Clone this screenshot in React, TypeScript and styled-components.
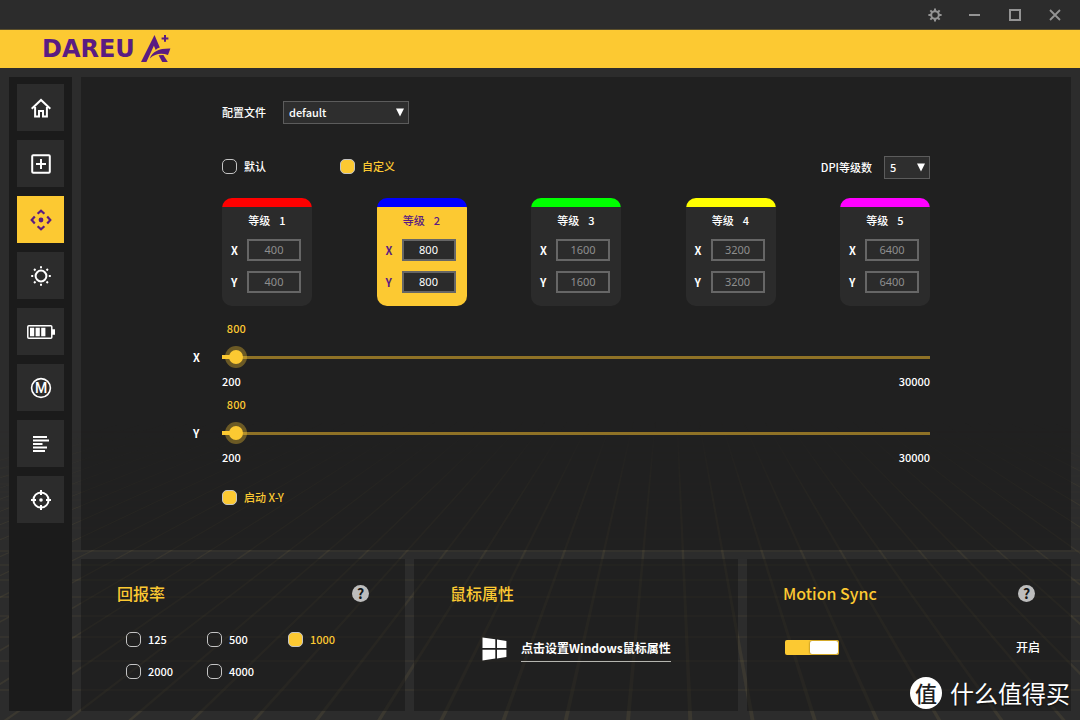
import React, { useState } from "react";
import styled, { createGlobalStyle, css } from "styled-components";

const YELLOW = "#fcc932";
const PURPLE = "#5a1c82";
const UI_FONT = `"Noto Sans CJK SC", "Noto Sans", sans-serif`;

const GlobalStyle = createGlobalStyle`
  *, *::before, *::after { box-sizing: border-box; }
  body {
    margin: 0;
    background: #2c2c2c;
    color: #fff;
    font: 500 11px/16px ${UI_FONT};
  }
  button, input, select { font: inherit; color: inherit; margin: 0; }
  button { border: 0; padding: 0; background: none; cursor: pointer; }
  svg { display: block; }
`;

const Window = styled.div`
  position: relative;
  isolation: isolate;
  display: flex;
  flex-direction: column;
  min-height: 100vh;
  overflow: hidden;
`;

const Backdrop = styled.svg`
  position: absolute;
  z-index: -1;
  left: 0;
  bottom: 0;
  width: 100%;
  height: 320px;
`;

const TitleBar = styled.div`
  display: flex;
  justify-content: flex-end;
  height: 30px;
  padding-right: 5px;
  background: #2c2c2c;
  border-bottom: 1px solid #5c4f2a;
`;

const WindowButton = styled.button`
  display: grid;
  place-items: center;
  width: 40px;
  height: 30px;
  color: #949494;
`;

const Brand = styled.header`
  display: flex;
  align-items: center;
  gap: 6px;
  height: 38px;
  padding-left: 42px;
  background: ${YELLOW};
  color: ${PURPLE};
`;

const Wordmark = styled.span`
  font: 700 24px/24px "DejaVu Sans", sans-serif;
`;

const Workspace = styled.div`
  flex: 1;
  display: grid;
  grid-template-columns: 63px minmax(0, 1fr);
  gap: 9px;
  padding: 9px;
`;

const Sidebar = styled.nav`
  display: flex;
  flex-direction: column;
  align-items: center;
  gap: 9px;
  padding-top: 7px;
  background: #1b1b1b;
`;

const NavButton = styled.button<{ $active?: boolean }>`
  display: grid;
  place-items: center;
  width: 47px;
  height: 47px;
  background: ${(p) => (p.$active ? YELLOW : "#2c2c2c")};
  color: ${(p) => (p.$active ? PURPLE : "#fff")};
`;

const Content = styled.main`
  display: flex;
  flex-direction: column;
  gap: 9px;
`;

const panel = css`
  background: rgba(20, 20, 20, 0.5);
`;

const DpiPanel = styled.section`
  ${panel}
  flex: 1;
  padding: 24px 141px;
`;

const ProfileRow = styled.div`
  display: flex;
  align-items: center;
  gap: 17px;
  margin-bottom: 32px;

  label { padding-bottom: 2px; }
`;

const ModeRow = styled.div`
  display: flex;
  align-items: center;
  margin-bottom: 19px;
`;

const ModeOption = styled.div`
  width: 118px;
`;

const LevelCount = styled.div`
  display: flex;
  align-items: center;
  gap: 12px;
  margin-left: auto;

  label { padding-bottom: 2px; }
`;

const SelectBox = styled.span<{ $width: number }>`
  position: relative;
  display: block;
  width: ${(p) => p.$width}px;
  height: 23px;

  select {
    display: block;
    width: 100%;
    height: 100%;
    padding: 0 5px 2px;
    appearance: none;
    border: 1px solid #5c5c5c;
    border-radius: 0;
    background: #2e2e2e;
  }
  svg {
    position: absolute;
    top: 7px;
    right: 5px;
    pointer-events: none;
  }
`;

const Choice = styled.label<{ $on?: boolean }>`
  display: inline-flex;
  align-items: center;
  gap: 7px;
  height: 16px;
  color: ${(p) => (p.$on ? YELLOW : "#fff")};

  input {
    width: 15px;
    height: 15px;
    appearance: none;
    border: 1px solid #c4c4c4;
    border-radius: 5px;
  }
  input:checked { background: ${YELLOW}; }
`;

const Levels = styled.div`
  display: flex;
  justify-content: space-between;
  margin-bottom: 16px;
`;

const LevelCard = styled.div<{ $color: string; $active: boolean }>`
  width: 90px;
  overflow: hidden;
  border-radius: 10px;
  padding-bottom: 13px;
  background: linear-gradient(${(p) => p.$color} 9px, ${(p) => (p.$active ? YELLOW : "#2b2b2b")} 9px);
  color: ${(p) => (p.$active ? PURPLE : "#fff")};

  input {
    width: 54px;
    height: 22px;
    padding: 0 0 2px;
    border: 2px solid #666;
    border-radius: 0;
    background: #2b2b2b;
    color: ${(p) => (p.$active ? "#fff" : "#8e8e8e")};
    font: 400 11px/16px "Noto Sans", sans-serif;
    text-align: center;
  }
`;

const LevelTitle = styled.div`
  display: flex;
  justify-content: center;
  gap: 9px;
  padding: 14px 0 11px;
`;

const Axis = styled.label`
  display: flex;
  align-items: center;
  gap: 9px;
  padding-left: 9px;

  & + & { margin-top: 10px; }
  span { width: 7px; font-weight: 700; }
`;

const SliderBlock = styled.div`
  display: grid;
  grid-template-columns: 29px minmax(0, 1fr);
  grid-template-rows: 17px 36px 16px;
  align-items: center;
  margin: 0 0 7px -29px;

  output {
    grid-area: 1 / 2;
    align-self: start;
    width: 30px;
    color: ${YELLOW};
    line-height: 13px;
    text-align: center;
  }
  label {
    grid-area: 2 / 1;
    font-weight: 700;
  }
`;

const Range = styled.input`
  --line: calc(100% - 14px);
  grid-area: 2 / 2;
  width: calc(100% + 14px);
  height: 14px;
  margin: 0 -7px;
  appearance: none;
  background: none;

  &::-webkit-slider-runnable-track {
    height: 14px;
    background:
      linear-gradient(${YELLOW}, ${YELLOW}) 7px center / calc(var(--line) * var(--fill)) 4px no-repeat,
      linear-gradient(#8f7226, #8f7226) center / var(--line) 3px no-repeat;
  }
  &::-webkit-slider-thumb {
    width: 14px;
    height: 14px;
    appearance: none;
    border-radius: 50%;
    background: ${YELLOW};
    box-shadow: 0 0 0 4px rgba(252, 201, 50, 0.35);
  }
`;

const Limits = styled.div`
  grid-area: 3 / 2;
  align-self: start;
  display: flex;
  justify-content: space-between;
  line-height: 12px;
`;

const LinkAxes = styled.div`
  padding-top: 15px;
`;

const Cards = styled.div`
  display: grid;
  grid-template-columns: repeat(3, minmax(0, 1fr));
  gap: 9px;
`;

const Card = styled.section`
  ${panel}
  min-height: 152px;
  padding: 22px 31px 22px 36px;
`;

const CardHead = styled.div`
  display: flex;
  align-items: center;
  justify-content: space-between;
  padding-right: 5px;
  margin-bottom: 26px;

  h2 {
    margin: 0;
    color: ${YELLOW};
    font-size: 16px;
    font-weight: 500;
    line-height: 24px;
  }
`;

const HelpButton = styled.button`
  width: 17px;
  height: 17px;
  border-radius: 50%;
  background: #bdbdbd;
  color: #151515;
  font-size: 14px;
  font-weight: 700;
  line-height: 16px;
`;

const Rates = styled.div`
  display: grid;
  grid-template-columns: repeat(3, 81px);
  row-gap: 16px;
  padding-left: 9px;
`;

const SystemRow = styled.div`
  display: flex;
  align-items: center;
  gap: 14px;
  padding: 4px 0 0 32px;

  a {
    padding-bottom: 3px;
    margin-top: 3px;
    border-bottom: 1px solid #b5b5b0;
    color: #fff;
    font-size: 12px;
    font-weight: 700;
    line-height: 20px;
    text-decoration: none;
  }
`;

const SyncRow = styled.label`
  display: flex;
  align-items: center;
  justify-content: space-between;
  padding: 6px 0 0 2px;
  font-size: 12px;
  line-height: 20px;
`;

const Toggle = styled.input`
  display: flex;
  width: 54px;
  height: 15px;
  padding: 1px;
  appearance: none;
  border-radius: 2px;
  background: #666;

  &::before {
    content: "";
    width: 28px;
    border-radius: 2px;
    background: #fff;
    box-shadow: 0 0 2px rgba(0, 0, 0, 0.6);
  }
  &:checked {
    justify-content: flex-end;
    background: ${YELLOW};
  }
`;

const Watermark = styled.div`
  position: absolute;
  right: 10px;
  bottom: 11px;
  display: flex;
  align-items: center;
  gap: 8px;
  font-size: 24px;
  font-weight: 400;
  line-height: 32px;
  text-shadow: 0 1px 2px rgba(0, 0, 0, 0.7);
`;

const Seal = styled.span`
  width: 32px;
  height: 32px;
  border-radius: 50%;
  background: #fff;
  color: #1e1e1e;
  font-size: 22px;
  font-weight: 500;
  line-height: 30px;
  text-align: center;
  text-shadow: none;
`;

const rays = Array.from({ length: 51 }, (_, i) => i - 25);
const rungs = [32, 39, 46, 53, 60, 68, 76, 84, 92, 100, 108, 118, 128, 139, 151, 165, 180, 197, 216, 237, 261, 290];

/* Perspective floor that fades out towards its horizon. */
function FloorGrid() {
  return (
    <Backdrop viewBox="0 0 1080 320" preserveAspectRatio="none" aria-hidden="true">
      <defs>
        <linearGradient id="fade" x1="0" y1="0" x2="0" y2="1">
          <stop offset="0.06" stopColor="#fff" stopOpacity="0" />
          <stop offset="0.3" stopColor="#fff" stopOpacity="0.8" />
          <stop offset="1" stopColor="#fff" />
        </linearGradient>
        <mask id="floor" maskUnits="userSpaceOnUse" x="0" y="0" width="1080" height="320">
          <rect width="1080" height="320" fill="url(#fade)" />
        </mask>
      </defs>
      <g mask="url(#floor)" fill="#cfae55" stroke="#cfae55">
        {rays.map((n) => {
          const slope = 0.044 + n * 0.135;
          const top = 670 + slope * 141;
          const end = 670 + slope * 461;
          return <path key={n} d={`M${top - 0.5} 0L${end - 2} 320H${end + 2}L${top + 0.5} 0Z`} fillOpacity="0.09" stroke="none" />;
        })}
        {rungs.map((y) => (
          <path key={y} d={`M0 ${y}H1080`} strokeOpacity={y > 150 ? 0.06 : 0.04} strokeWidth={y > 150 ? 2 : 1} />
        ))}
      </g>
    </Backdrop>
  );
}

function Emblem() {
  return (
    <svg width="30" height="28" viewBox="0 0 30 28" fill="currentColor" aria-hidden="true">
      <path d="M13.5 0 18.8 12.6Q16 13.4 14.7 14.9L12.9 10.8 5.4 27H0Z" />
      <path d="M8.8 23.4C11.5 16.5 18 13.4 29.4 13.6L27 20C20 17.6 14 18.8 8.8 23.4Z" />
      <path d="M17.6 20.3 22.4 20 26.8 27H21.2Z" />
      <path d="M23 0h2v2.4h2.4v2H25v2.4h-2V4.4h-2.4v-2H23Z" />
    </svg>
  );
}

function Stroke({ size = 20, w = 2, children }: { size?: number; w?: number; children: React.ReactNode }) {
  return (
    <svg width={size} height={size} viewBox={`0 0 ${size} ${size}`} fill="none" stroke="currentColor" strokeWidth={w} aria-hidden="true">
      {children}
    </svg>
  );
}

const octants = [0, 45, 90, 135, 180, 225, 270, 315];
const quarters = [0, 90, 180, 270];

const navItems: { name: string; icon: React.ReactNode }[] = [
  {
    name: "主页",
    icon: (
      <Stroke>
        <path d="M.7 10.8 10 2l9.3 8.8M4.1 9v9.5h3.9v-5.6h4v5.6h3.9V9" />
      </Stroke>
    ),
  },
  {
    name: "按键",
    icon: (
      <Stroke>
        <rect x="1.2" y="1.2" width="17.6" height="17.6" rx="1" />
        <path d="M10 5v10M5 10h10" />
      </Stroke>
    ),
  },
  {
    name: "DPI",
    icon: (
      <Stroke size={22} w={2.2}>
        {quarters.map((a) => (
          <path key={a} d="M7.6 4.8 11 1.7l3.4 3.1" transform={`rotate(${a} 11 11)`} />
        ))}
        <circle cx="11" cy="11" r="2.4" fill="currentColor" stroke="none" />
      </Stroke>
    ),
  },
  {
    name: "灯光",
    icon: (
      <Stroke>
        <circle cx="10" cy="10" r="5.4" strokeWidth="2" />
        {octants.map((a) => (
          <path key={a} d="M10 .2v2" transform={`rotate(${a} 10 10)`} />
        ))}
      </Stroke>
    ),
  },
  {
    name: "电池",
    icon: (
      <svg width="28" height="14" viewBox="0 0 28 14" fill="currentColor" aria-hidden="true">
        <rect x=".8" y=".8" width="24" height="12.4" rx="1" fill="none" stroke="currentColor" strokeWidth="1.5" />
        <path d="M3 2.7h4.2v8.6H3zM8.6 2.7h4.2v8.6H8.6zM14.2 2.7h4.2v8.6h-4.2zM25 4.2h3v5.6h-3z" />
      </svg>
    ),
  },
  {
    name: "宏",
    icon: (
      <Stroke size={22} w={1.6}>
        <circle cx="11" cy="11" r="9.4" />
        <text x="11" y="15.8" textAnchor="middle" fill="currentColor" stroke="none" fontFamily="Roboto, sans-serif" fontWeight="500" fontSize="14">
          M
        </text>
      </Stroke>
    ),
  },
  {
    name: "日志",
    icon: (
      <Stroke size={16}>
        <path d="M0 1h14M0 4.5h16M0 8h9.5M0 11.5h14M0 15h12" />
      </Stroke>
    ),
  },
  {
    name: "校准",
    icon: (
      <Stroke>
        <circle cx="10" cy="10" r="7.6" />
        <path d="M10 0v5M10 15v5M0 10h5M15 10h5" />
        <circle cx="10" cy="10" r="1.8" fill="currentColor" stroke="none" />
      </Stroke>
    ),
  },
];

const levels = [
  { color: "#ff0000", value: 400 },
  { color: "#0000ff", value: 800 },
  { color: "#00ff00", value: 1600 },
  { color: "#ffff00", value: 3200 },
  { color: "#ff00ff", value: 6400 },
];

const MIN = 200;
const MAX = 30000;

function Arrow() {
  return (
    <svg width="8" height="9" viewBox="0 0 8 9" fill="#fff" aria-hidden="true">
      <path d="M0 .5h8L4 8.5Z" />
    </svg>
  );
}

function Slider({ axis, value, onChange }: { axis: string; value: number; onChange: (v: number) => void }) {
  const fill = (value - MIN) / (MAX - MIN);
  const id = `dpi-${axis}`;
  return (
    <SliderBlock>
      <output htmlFor={id} style={{ marginLeft: `calc(${fill * 100}% - 15px)` }}>
        {value}
      </output>
      <label htmlFor={id}>{axis}</label>
      <Range
        id={id}
        type="range"
        min={MIN}
        max={MAX}
        step={50}
        value={value}
        onChange={(e) => onChange(Number(e.target.value))}
        style={{ "--fill": fill } as React.CSSProperties}
      />
      <Limits>
        <span>{MIN}</span>
        <span>{MAX}</span>
      </Limits>
    </SliderBlock>
  );
}

export default function App() {
  const [page, setPage] = useState(2);
  const [mode, setMode] = useState("自定义");
  const [x, setX] = useState(800);
  const [y, setY] = useState(800);
  const [linked, setLinked] = useState(true);
  const [rate, setRate] = useState(1000);
  const [sync, setSync] = useState(true);

  return (
    <Window>
      <GlobalStyle />
      <FloorGrid />
      <TitleBar>
        <WindowButton aria-label="设置">
          <Stroke size={14} w={2}>
            <circle cx="7" cy="7" r="3.8" strokeWidth="2" />
            {octants.map((a) => (
              <path key={a} d="M7 .4v2.6" transform={`rotate(${a} 7 7)`} />
            ))}
          </Stroke>
        </WindowButton>
        <WindowButton aria-label="最小化">
          <Stroke size={12}>
            <path d="M0 6h11" />
          </Stroke>
        </WindowButton>
        <WindowButton aria-label="最大化">
          <Stroke size={12}>
            <rect x="1" y="1" width="10" height="10" />
          </Stroke>
        </WindowButton>
        <WindowButton aria-label="关闭">
          <Stroke size={12} w={1.8}>
            <path d="M1 1l10 10M11 1 1 11" />
          </Stroke>
        </WindowButton>
      </TitleBar>
      <Brand>
        <Wordmark>DAREU</Wordmark>
        <Emblem />
      </Brand>
      <Workspace>
        <Sidebar>
          {navItems.map((item, i) => (
            <NavButton key={item.name} aria-label={item.name} $active={i === page} onClick={() => setPage(i)}>
              {item.icon}
            </NavButton>
          ))}
        </Sidebar>
        <Content>
          <DpiPanel>
            <ProfileRow>
              <label htmlFor="profile">配置文件</label>
              <SelectBox $width={126}>
                <select id="profile">
                  <option>default</option>
                </select>
                <Arrow />
              </SelectBox>
            </ProfileRow>
            <ModeRow>
              {["默认", "自定义"].map((m) => (
                <ModeOption key={m}>
                  <Choice $on={mode === m}>
                    <input type="radio" name="mode" checked={mode === m} onChange={() => setMode(m)} />
                    {m}
                  </Choice>
                </ModeOption>
              ))}
              <LevelCount>
                <label htmlFor="count">DPI等级数</label>
                <SelectBox $width={46}>
                  <select id="count">
                    <option>5</option>
                  </select>
                  <Arrow />
                </SelectBox>
              </LevelCount>
            </ModeRow>
            <Levels>
              {levels.map((level, i) => (
                <LevelCard key={level.color} $color={level.color} $active={i === 1}>
                  <LevelTitle>
                    <span>等级</span>
                    <span>{i + 1}</span>
                  </LevelTitle>
                  {["X", "Y"].map((axis) => (
                    <Axis key={axis}>
                      <span>{axis}</span>
                      <input type="text" defaultValue={level.value} />
                    </Axis>
                  ))}
                </LevelCard>
              ))}
            </Levels>
            <Slider axis="X" value={x} onChange={setX} />
            <Slider axis="Y" value={y} onChange={setY} />
            <LinkAxes>
              <Choice $on={linked}>
                <input type="checkbox" checked={linked} onChange={() => setLinked(!linked)} />
                启动 X-Y
              </Choice>
            </LinkAxes>
          </DpiPanel>
          <Cards>
            <Card>
              <CardHead>
                <h2>回报率</h2>
                <HelpButton aria-label="回报率说明">?</HelpButton>
              </CardHead>
              <Rates>
                {[125, 500, 1000, 2000, 4000].map((r) => (
                  <Choice key={r} $on={rate === r}>
                    <input type="radio" name="rate" checked={rate === r} onChange={() => setRate(r)} />
                    {r}
                  </Choice>
                ))}
              </Rates>
            </Card>
            <Card>
              <CardHead>
                <h2>鼠标属性</h2>
              </CardHead>
              <SystemRow>
                <svg width="25" height="24" viewBox="0 0 25 24" fill="#fff" aria-hidden="true">
                  <path d="M.5.5 13.3 2.3v8.6H.5zM15 2.5l9.4 1.4v7H15zM.5 12.8h12.8v8.7L.5 23.4zM15 12.8h9.4v7.3L15 21.4z" />
                </svg>
                <a href="#mouse">点击设置Windows鼠标属性</a>
              </SystemRow>
            </Card>
            <Card>
              <CardHead>
                <h2>Motion Sync</h2>
                <HelpButton aria-label="Motion Sync 说明">?</HelpButton>
              </CardHead>
              <SyncRow>
                <Toggle type="checkbox" checked={sync} onChange={() => setSync(!sync)} />
                开启
              </SyncRow>
            </Card>
          </Cards>
        </Content>
      </Workspace>
      <Watermark>
        <Seal>值</Seal>
        什么值得买
      </Watermark>
    </Window>
  );
}
